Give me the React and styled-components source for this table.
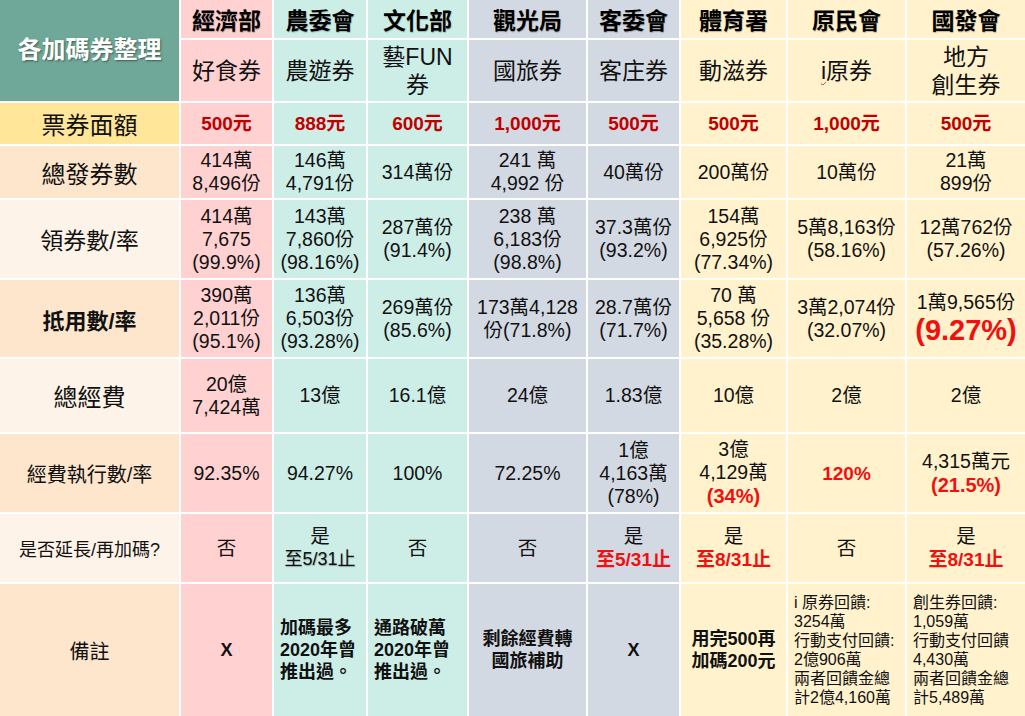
import React from "react";
import styled, { createGlobalStyle } from "styled-components";

const GlobalStyle = createGlobalStyle`
  *, *::before, *::after {
    box-sizing: border-box;
    margin: 0;
    padding: 0;
  }
  body {
    background: #ffffff;
    font-family: "Liberation Sans", "Noto Sans CJK TC", sans-serif;
    color: #111;
    overflow: hidden;
  }
`;

const tones = {
  pink: "#ffd1d1",
  teal: "#cdede7",
  slate: "#d3d9e2",
  cream: "#fff2cc",
};

const labelTones = {
  yellow: "#ffe699",
  peach: "#fde6cc",
  light: "#fdf3e8",
};

const Table = styled.div`
  width: 1025px;
  height: 716px;
  overflow: hidden;
  display: grid;
  grid-template-columns: 179px 91px 92px 99px 117px 91px 105px 117px 118px;
  grid-template-rows: 38px 61px 41px 52px 78px 77px 73px 78px 68px 132px;
  gap: 2px;
  background: #ffffff;
`;

const Corner = styled.div`
  grid-row: 1 / span 2;
  grid-column: 1;
  background: #6fa898;
  color: #ffffff;
  font-size: 24px;
  font-weight: bold;
  text-shadow: 1px 1px 2px rgba(0, 0, 0, 0.45);
  display: flex;
  align-items: center;
  justify-content: center;
  padding-bottom: 6px;
`;

const OrgCell = styled.div`
  background: ${(p) => tones[p.tone]};
  font-size: 23px;
  font-weight: bold;
  color: #000;
  display: flex;
  align-items: center;
  justify-content: center;
  text-shadow: 0.5px 0.5px 1px rgba(0, 0, 0, 0.25);
`;

const VoucherCell = styled.div`
  background: ${(p) => tones[p.tone]};
  font-size: 23px;
  line-height: 28px;
  text-align: center;
  display: flex;
  align-items: center;
  justify-content: center;
  white-space: pre-line;
`;

const LabelCell = styled.div`
  background: ${(p) => labelTones[p.tone]};
  font-size: ${(p) => p.size}px;
  font-weight: ${(p) => (p.bold ? "bold" : "normal")};
  display: flex;
  align-items: center;
  justify-content: center;
  white-space: nowrap;
  color: #111;
`;

const DataCell = styled.div`
  background: ${(p) => tones[p.tone]};
  font-size: 19.5px;
  line-height: 23px;
  display: flex;
  flex-direction: column;
  align-items: ${(p) => (p.left ? "flex-start" : "center")};
  justify-content: center;
  text-align: ${(p) => (p.left ? "left" : "center")};
  padding: 0 ${(p) => (p.left ? 6 : 0)}px;
  white-space: pre-line;
`;

const Face = styled.span`
  color: #c00000;
  font-weight: bold;
  font-size: 19px;
`;

const Red = styled.span`
  color: #f01010;
  font-weight: bold;
  font-size: ${(p) => p.size || 19}px;
  line-height: ${(p) => (p.size ? p.size + 4 : 23)}px;
`;

const Dim = styled.span`
  font-size: 18px;
  text-shadow: 0.5px 0.5px 1px rgba(0, 0, 0, 0.3);
`;

const Note = styled.div`
  font-size: 18px;
  line-height: 22px;
  font-weight: bold;
  color: #111;
  white-space: pre-line;
`;

const SmallNote = styled.div`
  font-size: 16px;
  line-height: 19px;
  color: #111;
  white-space: pre-line;
  text-align: left;
`;

const Squiggle = styled.span`
  text-decoration: underline wavy #d03030;
  text-decoration-thickness: 1px;
  text-underline-offset: 2px;
`;

const labels = [
  { text: "票券面額", tone: "yellow", size: 24 },
  { text: "總發券數", tone: "peach", size: 24 },
  { text: "領券數/率", tone: "light", size: 23 },
  { text: "抵用數/率", tone: "peach", size: 22, bold: true },
  { text: "總經費", tone: "light", size: 24 },
  { text: "經費執行數/率", tone: "peach", size: 20 },
  { text: "是否延長/再加碼?", tone: "light", size: 18 },
  { text: "備註", tone: "peach", size: 20 },
];

const columns = [
  {
    org: "經濟部", tone: "pink", voucher: "好食券", face: "500元",
    issued: "414萬\n8,496份",
    claimed: "414萬\n7,675\n(99.9%)",
    used: "390萬\n2,011份\n(95.1%)",
    budget: "20億\n7,424萬",
    exec: "92.35%",
    extend: "否",
    note: <Note>X</Note>,
  },
  {
    org: "農委會", tone: "teal", voucher: "農遊券", face: "888元",
    issued: "146萬\n4,791份",
    claimed: "143萬\n7,860份\n(98.16%)",
    used: "136萬\n6,503份\n(93.28%)",
    budget: "13億",
    exec: "94.27%",
    extend: <>是<Dim>至5/31止</Dim></>,
    note: <Note>{"加碼最多\n2020年曾\n推出過。"}</Note>,
    noteLeft: true,
  },
  {
    org: "文化部", tone: "teal", voucher: "藝FUN\n券", face: "600元",
    issued: "314萬份",
    claimed: "287萬份\n(91.4%)",
    used: "269萬份\n(85.6%)",
    budget: "16.1億",
    exec: "100%",
    extend: "否",
    note: <Note>{"通路破萬\n2020年曾\n推出過。"}</Note>,
    noteLeft: true,
  },
  {
    org: "觀光局", tone: "slate", voucher: "國旅券", face: "1,000元",
    issued: "241 萬\n4,992 份",
    claimed: "238 萬\n6,183份\n(98.8%)",
    used: "173萬4,128\n份(71.8%)",
    budget: "24億",
    exec: "72.25%",
    extend: "否",
    note: <Note>{"剩餘經費轉\n國旅補助"}</Note>,
  },
  {
    org: "客委會", tone: "slate", voucher: "客庄券", face: "500元",
    issued: "40萬份",
    claimed: "37.3萬份\n(93.2%)",
    used: "28.7萬份\n(71.7%)",
    budget: "1.83億",
    exec: "1億\n4,163萬\n(78%)",
    extend: <>是<Red>至5/31止</Red></>,
    note: <Note>X</Note>,
  },
  {
    org: "體育署", tone: "cream", voucher: "動滋券", face: "500元",
    issued: "200萬份",
    claimed: "154萬\n6,925份\n(77.34%)",
    used: "70 萬\n5,658 份\n(35.28%)",
    budget: "10億",
    exec: <>{"3億\n4,129萬"}<Red size={20}>(34%)</Red></>,
    extend: <>是<Red>至8/31止</Red></>,
    note: <Note>{"用完500再\n加碼200元"}</Note>,
  },
  {
    org: "原民會", tone: "cream",
    voucher: <span><Squiggle>i</Squiggle>原券</span>,
    face: "1,000元",
    issued: "10萬份",
    claimed: "5萬8,163份\n(58.16%)",
    used: "3萬2,074份\n(32.07%)",
    budget: "2億",
    exec: <Red>120%</Red>,
    extend: "否",
    note: (
      <SmallNote>
        {"i 原券回饋:\n3254萬\n行動支付回饋:\n2億906萬\n兩者回饋金總\n計2億4,160萬"}
      </SmallNote>
    ),
    noteLeft: true,
  },
  {
    org: "國發會", tone: "cream", voucher: "地方\n創生券", face: "500元",
    issued: "21萬\n899份",
    claimed: "12萬762份\n(57.26%)",
    used: <>{"1萬9,565份"}<Red size={29}>(9.27%)</Red></>,
    budget: "2億",
    exec: <>{"4,315萬元"}<Red size={20}>(21.5%)</Red></>,
    extend: <>是<Red>至8/31止</Red></>,
    note: (
      <SmallNote>
        {"創生券回饋:\n1,059萬\n行動支付回饋\n4,430萬\n兩者回饋金總\n計5,489萬"}
      </SmallNote>
    ),
    noteLeft: true,
  },
];

const fields = ["face", "issued", "claimed", "used", "budget", "exec", "extend", "note"];

function App() {
  return (
    <>
      <GlobalStyle />
      <Table>
        <Corner>各加碼券整理</Corner>
        {columns.map((c, i) => (
          <OrgCell key={"org" + i} tone={c.tone} style={{ gridRow: 1, gridColumn: i + 2 }}>
            {c.org}
          </OrgCell>
        ))}
        {columns.map((c, i) => (
          <VoucherCell key={"v" + i} tone={c.tone} style={{ gridRow: 2, gridColumn: i + 2 }}>
            {c.voucher}
          </VoucherCell>
        ))}
        {labels.map((l, r) => (
          <React.Fragment key={"row" + r}>
            <LabelCell tone={l.tone} size={l.size} bold={l.bold} style={{ gridRow: r + 3, gridColumn: 1 }}>
              {l.text}
            </LabelCell>
            {columns.map((c, i) => {
              const key = fields[r];
              const value = c[key];
              return (
                <DataCell
                  key={key + i}
                  tone={c.tone}
                  left={key === "note" && c.noteLeft}
                  style={{ gridRow: r + 3, gridColumn: i + 2 }}
                >
                  {key === "face" ? <Face>{value}</Face> : value}
                </DataCell>
              );
            })}
          </React.Fragment>
        ))}
      </Table>
    </>
  );
}

export default App;
